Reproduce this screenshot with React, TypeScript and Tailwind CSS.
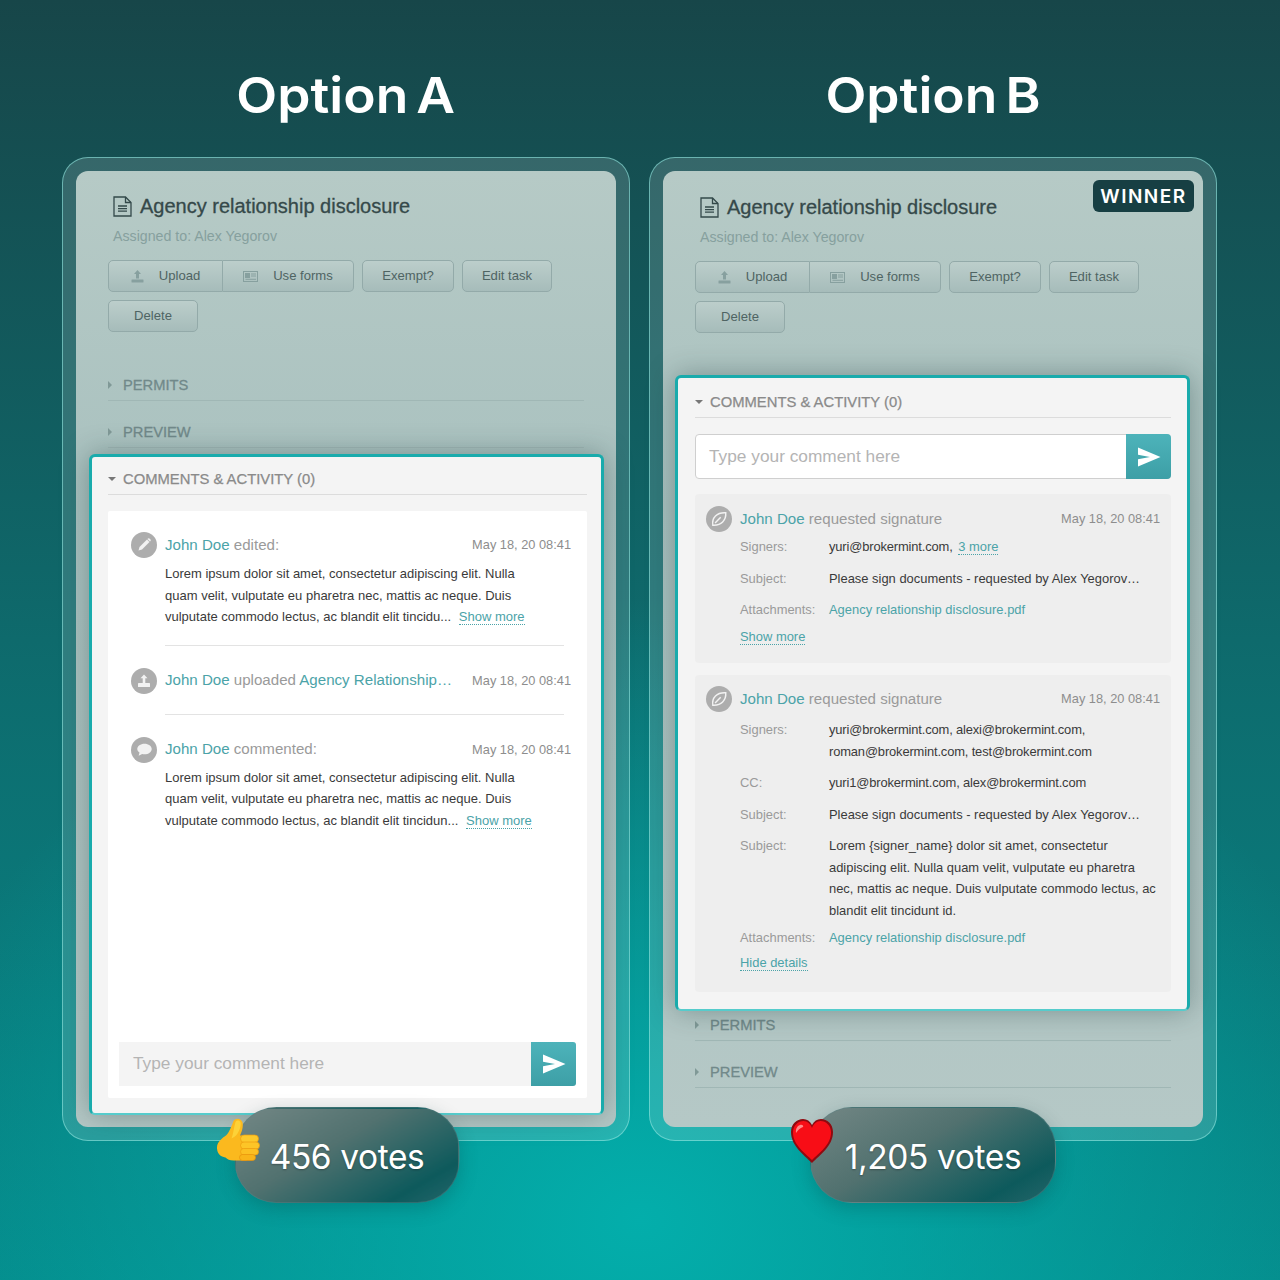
import React from "react";

const Caret = ({ open, cls }: { open?: boolean; cls: string }) => (
  <svg width="8" height="8" viewBox="0 0 8 8" className={cls}>
    {open ? <path d="M0 2h8L4 6z" fill="currentColor" /> : <path d="M0 0l4 4-4 4z" fill="currentColor" />}
  </svg>
);

const Send = () => (
  <svg width="24" height="20" viewBox="0 0 24 20">
    <path d="M1 0.5 23.5 10 1 19.5l0-7.3L13 10 1 7.8z" fill="#fff" />
  </svg>
);

const DocIcon = () => (
  <svg width="19" height="21" viewBox="0 0 19 21" fill="none" stroke="#33494a" strokeWidth="1.3">
    <path d="M1 1h11.500L18 6.500V20H1z" />
    <path d="M12.500 1v5.500H18" />
    <path d="M5 10h9M5 12.600h9M5 15.200h9" />
  </svg>
);

const UploadSmall = () => (
  <svg width="13" height="13" viewBox="0 0 13 13" fill="#87a09f">
    <path d="M6.500 0 10 4H8v4.500H5V4H3z" />
    <rect x="0.500" y="9.500" width="12" height="3" rx="0.500" />
  </svg>
);

const FormsSmall = () => (
  <svg width="15" height="11" viewBox="0 0 15 11" fill="none" stroke="#87a09f" strokeWidth="1">
    <rect x="0.500" y="0.500" width="14" height="10" />
    <rect x="2.500" y="2.500" width="4" height="4" fill="#87a09f" />
    <path d="M8 3h5M8 5h5M2.500 8.300h10.500" />
  </svg>
);

const Circle = ({ children }: { children: React.ReactNode }) => (
  <div className="flex h-[26px] w-[26px] shrink-0 items-center justify-center rounded-full bg-[#adadad]">{children}</div>
);

const Pencil = () => (
  <svg width="16" height="16" viewBox="0 0 16 16" fill="#f2f2f2">
    <path d="M11 2.500 13.500 5 6 12.500 2.500 13.500 3.500 10z" />
    <path d="M12 1.500a1 1 0 0 1 1.400 0l1.100 1.100a1 1 0 0 1 0 1.400l-.5.500L11.500 2z" />
  </svg>
);
const UploadC = () => (
  <svg width="16" height="16" viewBox="0 0 16 16" fill="#f2f2f2">
    <path d="M8 1.500l3.500 3.800H9.300V10H6.700V5.300H4.500z" />
    <rect x="2" y="10" width="12" height="4" rx="0.600" />
  </svg>
);
const Bubble = () => (
  <svg width="17" height="15" viewBox="0 0 16 14" fill="#f2f2f2">
    <path d="M8 1.500c3.700 0 6.800 2.200 6.800 5s-3 5-6.800 5c-.8 0-1.500-.1-2.200-.3L2.500 12.800l.8-2.900C2 9 1.200 7.800 1.200 6.500c0-2.800 3.100-5 6.800-5z" />
  </svg>
);
const Leaf = () => (
  <svg width="18" height="18" viewBox="0 0 16 16" fill="none" stroke="#f2f2f2" strokeWidth="1.300">
    <path d="M2.500 13.500C1.500 7 6 2 14 2.500 14.500 9 10 14 2.500 13.500z" />
    <path d="M4.500 11.500 9.500 6.500" />
  </svg>
);

const Thumb = () => (
  <svg width="44" height="46" viewBox="0 0 44 46">
    <path
      d="M17 3c2-3.500 8-3 9 1.500 1 4-.5 9-2.500 13H30v25H17c-4 0-6-1-8-3-3-.5-8-2-8.500-9C0 24 6 20 10 17c3-3 5-9 7-14z"
      fill="#fbb91e"
    />
    <path d="M19 4c1.500-2 4-2 5 .5.800 3-1 8-3 11-1 2-4 4-6 5 2-5 2.500-12 4-16.500z" fill="#fdd238" />
    <rect x="24" y="17" width="18" height="7.500" rx="3.700" fill="#fdc92c" stroke="#ec9c10" strokeWidth="0.700" />
    <rect x="24" y="24" width="19" height="7" rx="3.500" fill="#fdc527" stroke="#ec9c10" strokeWidth="0.700" />
    <rect x="24" y="30.500" width="18" height="6.500" rx="3.200" fill="#fcbf22" stroke="#ec9c10" strokeWidth="0.700" />
    <rect x="23" y="36.500" width="16" height="6" rx="3" fill="#f9b419" stroke="#e8930c" strokeWidth="0.700" />
  </svg>
);

const Heart = () => (
  <svg width="44" height="46" viewBox="0 0 44 46">
    <path d="M22 45C14 37 1 28 1 14 1 6 7 1 13 1c4 0 7 2 9 6 2-4 5-6 9-6 6 0 12 5 12 13 0 14-13 23-21 31z" fill="#8f0a10" />
    <path d="M22 42C15 35 3 27 3 14.500 3 7.500 8 3 13.500 3c4 0 7 3 8.500 7 1.500-4 4.500-7 8.500-7C36 3 41 7.500 41 14.500 41 27 29 35 22 42z" fill="#f80d16" />
    <path d="M10 7c-3 1-4.500 4-4 8 2-3 4-5 7-6 1-1-1-3-3-2z" fill="#ff8a8a" />
  </svg>
);

const Btn = ({ children, cls }: { children: React.ReactNode; cls: string }) => (
  <div
    className={`flex h-[32px] items-center justify-center border border-[#93aaa9] bg-[linear-gradient(180deg,#bccecb,#a6bcba)] text-[13.100px] text-[#4f6463] ${cls}`}
  >
    {children}
  </div>
);

const Header = () => (
  <div className="flex flex-col gap-[7px] px-[32px]">
    <div className="flex items-center gap-[8px] pl-[5px]">
      <DocIcon />
      <div className="text-[20px] leading-[26px] text-[#35494a] [-webkit-text-stroke:0.3px_#35494a]">
        Agency relationship disclosure
      </div>
    </div>
    <div className="pl-[5px] text-[14.200px] leading-[20px] text-[#86a09e]">Assigned to: Alex Yegorov</div>
    <div className="mt-[7px] flex flex-wrap gap-x-[8px] gap-y-[8px]">
      <div className="flex">
        <Btn cls="w-[115px] gap-[15px] rounded-l-[5px]">
          <UploadSmall />
          <span>Upload</span>
        </Btn>
        <Btn cls="w-[131px] gap-[15px] rounded-r-[5px] border-l-0">
          <FormsSmall />
          <span>Use forms</span>
        </Btn>
      </div>
      <Btn cls="w-[92px] rounded-[5px]">Exempt?</Btn>
      <Btn cls="w-[90px] rounded-[5px]">Edit task</Btn>
      <Btn cls="w-[90px] rounded-[5px]">Delete</Btn>
    </div>
  </div>
);

const Collapsed = ({ label }: { label: string }) => (
  <div className="mx-[32px] flex h-[24px] items-start gap-[7px] border-b border-[#a0b7b5] text-[14.700px] leading-[16px] text-[#71898a] [-webkit-text-stroke:0.3px_#71898a]">
    <Caret cls="mt-[4px] text-[#809997]" />
    {label}
  </div>
);

const Head = ({ h }: { h: string }) => (
  <div className={`flex items-end gap-[7px] border-b border-[#dcdcdc] pb-[7px] text-[14.800px] leading-[16px] text-[#8a8a8a] [-webkit-text-stroke:0.25px_#8a8a8a] ${h}`}>
    <Caret open cls="mb-[4px] text-[#777]" />
    COMMENTS &amp; ACTIVITY (0)
  </div>
);

const Name = () => <span className="text-[#4ba3a8]">John Doe</span>;
const Date8 = () => <div className="ml-auto shrink-0 text-[12.800px] text-[#8d8d8d]">May 18, 20 08:41</div>;
const More = ({ children }: { children: React.ReactNode }) => (
  <span className="border-b border-dotted border-[#4ba3a8] text-[#4ba3a8]">{children}</span>
);
const Mail = ({ children }: { children: React.ReactNode }) => <span className="tracking-[-0.15px]">{children}</span>;

const Body = ({ last }: { last: string }) => (
  <div className="pl-[34px] text-[13px] leading-[21.500px] text-[#3a3a3a]">
    Lorem ipsum dolor sit amet, consectetur adipiscing elit. Nulla
    <br />
    quam velit, vulputate eu pharetra nec, mattis ac neque. Duis
    <br />
    {last} <span className="ml-[4px]"><More>Show more</More></span>
  </div>
);

const Entry = ({ icon, children }: { icon: React.ReactNode; children: React.ReactNode }) => (
  <div className="flex h-[26px] items-center gap-[8px] text-[15.100px] text-[#9a9a9a]">
    <Circle>{icon}</Circle>
    <div className="min-w-0">{children}</div>
    <Date8 />
  </div>
);

const Row = ({ label, children, cls }: { label: string; children: React.ReactNode; cls?: string }) => (
  <div className={`flex pl-[34px] text-[12.930px] leading-[21.500px] ${cls ?? ""}`}>
    <div className="w-[89px] shrink-0 text-[#9a9a9a]">{label}</div>
    <div className="min-w-0 text-[#3a3a3a]">{children}</div>
  </div>
);

const Req = ({ pb }: { pb: string }) => (
  <div className={pb}>
    <Entry icon={<Leaf />}>
      <Name /> requested signature
    </Entry>
  </div>
);

const CardA = () => (
  <div className="relative z-10 flex h-[661px] flex-col rounded-[6px] border-[3px] border-b-[2px] border-[#19abac] border-b-[#56cccc] bg-[#f4f4f4] pl-[16px] pr-[14px] shadow-[0_0_28px_rgba(20,50,50,0.35)]">
    <Head h="h-[38px]" />
    <div className="mb-[15px] mt-[16px] flex flex-1 flex-col rounded-[2px] bg-white pb-[12px] pl-[23px] pr-[16px] pt-[21px]">
      <Entry icon={<Pencil />}>
        <Name /> edited:
      </Entry>
      <div className="mt-[5px]">
        <Body last="vulputate commodo lectus, ac blandit elit tincidu..." />
      </div>
      <div className="ml-[34px] mr-[7px] mt-[17px] border-t border-[#e3e3e3]" />
      <div className="mt-[22px]">
        <Entry icon={<UploadC />}>
          <Name /> uploaded <span className="text-[#4ba3a8]">Agency Relationship…</span>
        </Entry>
      </div>
      <div className="ml-[34px] mr-[7px] mt-[20px] border-t border-[#e3e3e3]" />
      <div className="mt-[22px]">
        <Entry icon={<Bubble />}>
          <Name /> commented:
        </Entry>
      </div>
      <div className="mt-[4px]">
        <Body last="vulputate commodo lectus, ac blandit elit tincidun..." />
      </div>
      <div className="-ml-[12px] -mr-[5px] mt-auto flex h-[44px] items-center justify-between rounded-r-[3px] bg-[#f4f4f4] pl-[14px] text-[17.300px] text-[#b4b4b4]">
        Type your comment here
        <div className="flex h-[44px] w-[45px] items-center justify-center rounded-r-[3px] bg-[linear-gradient(180deg,#4db3ba,#3d9fa6)]">
          <Send />
        </div>
      </div>
    </div>
  </div>
);

const CardB = () => (
  <div className="relative z-10 flex h-[636px] flex-col rounded-[6px] border-[3px] border-b-[2px] border-[#19abac] border-b-[#56cccc] bg-[#f4f4f4] pl-[17px] pr-[16px] shadow-[0_0_28px_rgba(20,50,50,0.35)]">
    <Head h="h-[40px]" />
    <div className="mt-[16px] flex h-[45px] items-center justify-between rounded-[4px] border border-[#cfcfcf] bg-white pl-[13px] text-[17.300px] text-[#b4b4b4]">
      Type your comment here
      <div className="-mr-px flex h-[45px] w-[45px] items-center justify-center rounded-r-[4px] bg-[linear-gradient(180deg,#4db3ba,#3d9fa6)]">
        <Send />
      </div>
    </div>
    <div className="mt-[15px] flex h-[169px] flex-col rounded-[4px] bg-[#eeeeee] pl-[11px] pr-[11px] pt-[12px]">
      <Req pb="pb-[4px]" />
      <div className="flex flex-col gap-[10px]">
        <Row label="Signers:">
          <Mail>yuri@brokermint.com,</Mail> <span className="ml-[2px]"><More>3 more</More></span>
        </Row>
        <Row label="Subject:">Please sign documents - requested by Alex Yegorov…</Row>
        <Row label="Attachments:"><span className="text-[#4ba3a8]">Agency relationship disclosure.pdf</span></Row>
      </div>
      <div className="mt-[5px] pl-[34px] text-[12.930px] leading-[21.500px]"><More>Show more</More></div>
    </div>
    <div className="mt-[12px] flex h-[317px] flex-col rounded-[4px] bg-[#eeeeee] pl-[11px] pr-[11px] pt-[11px]">
      <Req pb="pb-[7px]" />
      <div className="flex flex-col gap-[10px]">
        <Row label="Signers:">
          <Mail>yuri@brokermint.com, alexi@brokermint.com,</Mail>
          <br />
          <Mail>roman@brokermint.com, test@brokermint.com</Mail>
        </Row>
        <Row label="CC:"><Mail>yuri1@brokermint.com, alex@brokermint.com</Mail></Row>
        <Row label="Subject:">Please sign documents - requested by Alex Yegorov…</Row>
        <Row label="Subject:">
          Lorem {"{signer_name}"} dolor sit amet, consectetur
          <br />
          adipiscing elit. Nulla quam velit, vulputate eu pharetra
          <br />
          nec, mattis ac neque. Duis vulputate commodo lectus, ac
          <br />
          blandit elit tincidunt id.
        </Row>
        <Row label="Attachments:" cls="-mt-[4px]"><span className="text-[#4ba3a8]">Agency relationship disclosure.pdf</span></Row>
      </div>
      <div className="mt-[3px] pl-[34px] text-[12.930px] leading-[21.500px]"><More>Hide details</More></div>
    </div>
  </div>
);

const Pill = ({ emoji, votes, w, ex }: { emoji: React.ReactNode; votes: string; w: string; ex: string }) => (
  <div
    className={`absolute bottom-[-63px] left-1/2 z-20 flex h-[96px] -translate-x-1/2 items-center justify-center rounded-[42px] border border-[#5a8587]/40 bg-[linear-gradient(150deg,#738785_0%,#51716f_42%,#0d5a5c_82%,#25666a_100%)] text-[33.500px] text-white shadow-[0_6px_18px_rgba(0,60,60,0.25)] ${w}`}
  >
    <div className={`absolute top-[10px] ${ex}`}>{emoji}</div>
    <span className="pt-[4px] font-['Inter',sans-serif] tracking-[-0.4px] [text-shadow:0_1px_2px_rgba(0,0,0,0.3)]">{votes}</span>
  </div>
);

const Column = ({ title, children, pill }: { title: string; children: React.ReactNode; pill: React.ReactNode }) => (
  <div className="flex w-[568px] flex-col">
    <div className="h-[157px] pt-[67px] text-center font-['Inter',sans-serif] text-[50px] font-semibold leading-[56px] text-white">
      <span className="inline-block scale-x-[1.065] [word-spacing:-5px]">{title}</span>
    </div>
    <div className="relative h-[984px] rounded-[26px] border border-[#8fe6df]/60 bg-white/[0.14] p-[13px]">
      <div className="relative flex h-full flex-col rounded-[12px] bg-[linear-gradient(180deg,#b6cac6_0%,#a9c1bf_35%,#b5c8c6_100%)]">
        {children}
      </div>
      {pill}
    </div>
  </div>
);

export default function App() {
  return (
    <div className="flex h-[1280px] w-[1280px] gap-[19px] overflow-hidden bg-[radial-gradient(ellipse_760px_620px_at_640px_1220px,#03aeab_0%,rgba(3,174,171,0)_100%),linear-gradient(180deg,#174649_0%,#0e6a6c_50%,#058a8a_100%)] pl-[62px] font-['Liberation_Sans',sans-serif]">
      <Column
        title="Option A"
        pill={<Pill w="ml-[1px] w-[225px]" ex="left-[-19px]" emoji={<Thumb />} votes="456 votes" />}
      >
        <div className="pt-[22px]">
          <Header />
        </div>
        <div className="mt-[45px] flex flex-col gap-[23px]">
          <Collapsed label="PERMITS" />
          <Collapsed label="PREVIEW" />
        </div>
        <div className="ml-[13px] mr-[12px] mt-[6px]">
          <CardA />
        </div>
      </Column>
      <Column
        title="Option B"
        pill={<Pill w="w-[246px]" ex="left-[-21px]" emoji={<Heart />} votes="1,205 votes" />}
      >
        <div className="absolute right-[9px] top-[9px] z-10 flex h-[32px] w-[101px] items-center justify-center rounded-[6px] bg-[#173f43] font-['Inter',sans-serif] text-[19px] font-semibold leading-none tracking-[1.500px] text-white">
          WINNER
        </div>
        <div className="pt-[23px]">
          <Header />
        </div>
        <div className="ml-[12px] mr-[13px] mt-[42px]">
          <CardB />
        </div>
        <div className="mt-[6px] flex flex-col gap-[23px]">
          <Collapsed label="PERMITS" />
          <Collapsed label="PREVIEW" />
        </div>
      </Column>
    </div>
  );
}
